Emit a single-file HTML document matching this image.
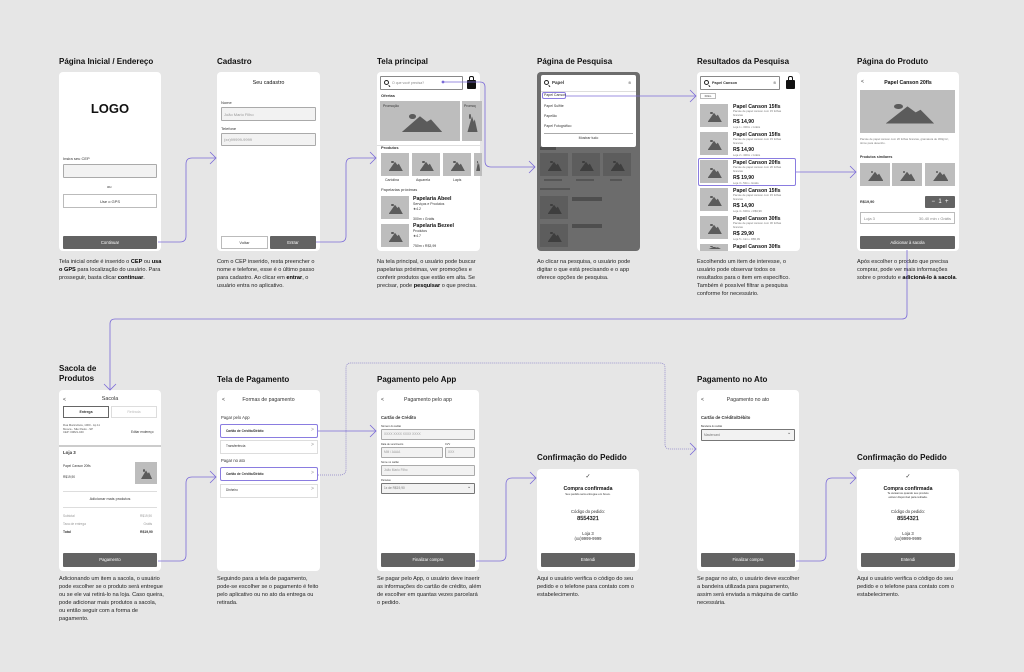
<!DOCTYPE html>
<html><head><meta charset="utf-8">
<style>
*{margin:0;padding:0;box-sizing:border-box}
body{width:1024px;height:672px;background:#e6e6e6;position:relative;overflow:hidden;font-family:"Liberation Sans",sans-serif;color:#222}
.a{position:absolute}
.card{position:absolute;background:#fff;border-radius:4px;overflow:hidden}
.h{position:absolute;font-weight:bold;font-size:8px;color:#111;white-space:nowrap;line-height:10px}
.d{position:absolute;font-size:5.6px;line-height:8px;color:#222;width:105px}
.d b{color:#000}
.t{position:absolute;font-size:4px;line-height:5px;color:#333;white-space:nowrap}
.tb{position:absolute;font-size:5.2px;line-height:6px;color:#111;white-space:nowrap;font-weight:bold}
.in{position:absolute;border:0.8px solid #aaa;background:#f2f2f2;border-radius:1px}
.btn{position:absolute;background:#636363;color:#fff;font-size:4.2px;text-align:center;border-radius:1px}
.ob{position:absolute;border:0.8px solid #bbb;background:#fff;font-size:4px;text-align:center;color:#333}
.img{position:absolute;background:#bdbdbd}
.img::after{content:"";position:absolute;left:27%;right:22%;top:38%;bottom:22%;background:#5b5b5b;clip-path:polygon(0 100%,45% 0,62% 35%,72% 20%,100% 100%)}
.img::before{content:"";position:absolute;left:36%;top:33%;width:9%;height:12%;border-radius:50%;background:#5b5b5b}
.dk{background:#5d5d5d}.dk::after,.dk::before{background:#3e3e3e}
.ln{position:absolute;height:0.8px;background:#ddd}
.row{position:absolute;border:0.8px solid #ddd;background:#fff}
.sel{border:0.9px solid #8a7ce0!important;border-radius:2px}
.chev{position:absolute;font-size:5px;color:#999}
.mag{position:absolute;width:5px;height:5px;border:0.9px solid #222;border-radius:50%}
.mag::after{content:"";position:absolute;left:3.6px;top:3.6px;width:2.4px;height:0.9px;background:#222;transform:rotate(45deg);transform-origin:0 0}
</style></head><body>

<div class="h" style="left:59px;top:57px">Página Inicial / Endereço</div>
<div class="h" style="left:217px;top:57px">Cadastro</div>
<div class="h" style="left:377px;top:57px">Tela principal</div>
<div class="h" style="left:537px;top:57px">Página de Pesquisa</div>
<div class="h" style="left:697px;top:57px">Resultados da Pesquisa</div>
<div class="h" style="left:857px;top:57px">Página do Produto</div>

<!-- card1 -->
<div class="card" style="left:59px;top:72px;width:102px;height:179px"></div>
<div class="a" style="left:59px;top:101px;width:102px;text-align:center;font-weight:bold;font-size:13px;color:#111">LOGO</div>
<div class="t" style="left:63px;top:156px">Insira seu CEP</div>
<div class="in" style="left:63px;top:164px;width:94px;height:14px"></div>
<div class="t" style="left:107px;top:184px">ou</div>
<div class="ob" style="left:63px;top:194px;width:94px;height:14px;line-height:13px">Use o GPS</div>
<div class="btn" style="left:63px;top:236px;width:94px;height:13px;line-height:13px">Continuar</div>
<div class="d" style="left:59px;top:258px">Tela inicial onde é inserido o <b>CEP</b> ou <b>usa o GPS</b> para localização do usuário. Para prosseguir, basta clicar <b>continuar</b>.</div>

<!-- card2 -->
<div class="card" style="left:217px;top:72px;width:103px;height:179px"></div>
<div class="tb" style="left:217px;top:80px;width:103px;text-align:center;font-weight:normal;font-size:5.4px">Seu cadastro</div>
<div class="t" style="left:221px;top:100px">Nome</div>
<div class="in" style="left:221px;top:107px;width:95px;height:14px"></div>
<div class="t" style="left:224px;top:112px;color:#999">João Mario Filho</div>
<div class="t" style="left:221px;top:126px">Telefone</div>
<div class="in" style="left:221px;top:133px;width:95px;height:13px"></div>
<div class="t" style="left:224px;top:137px;color:#999">(xx)99999-9999</div>
<div class="ob" style="left:221px;top:236px;width:47px;height:13px;line-height:12px">Voltar</div>
<div class="btn" style="left:270px;top:236px;width:46px;height:13px;line-height:13px">Entrar</div>
<div class="d" style="left:217px;top:258px">Com o CEP inserido, resta preencher o nome e telefone, esse é o último passo para cadastro. Ao clicar em <b>entrar</b>, o usuário entra no aplicativo.</div>

<!-- card3 -->
<div class="card" style="left:377px;top:72px;width:103px;height:179px"></div>
<div class="in" style="left:380px;top:76px;width:83px;height:14px;background:#fff;border-color:#888"></div>
<div class="mag" style="left:384px;top:80px"></div>
<div class="t" style="left:392px;top:80.5px;color:#888;font-size:3.5px">O que você precisa?</div>
<div class="a" style="left:467px;top:80px;width:9px;height:9px;background:#111;border-radius:1px"></div>
<div class="a" style="left:469px;top:76px;width:5px;height:5px;border:1px solid #111;border-bottom:none;border-radius:2px 2px 0 0"></div>
<div class="t" style="left:381px;top:93px;font-weight:bold">Ofertas</div>
<div class="img" style="left:380px;top:101px;width:80px;height:40px"></div>
<div class="t" style="left:383px;top:104px;font-size:3.5px">Promoção</div>
<div class="img" style="left:462px;top:101px;width:20px;height:40px"></div>
<div class="t" style="left:464px;top:104px;font-size:3.5px">Promoç</div>
<div class="ln" style="left:377px;top:145px;width:103px"></div>
<div class="t" style="left:381px;top:145px;font-weight:bold">Produtos</div>
<div class="img" style="left:381px;top:153px;width:28px;height:23px"></div>
<div class="img" style="left:412px;top:153px;width:28px;height:23px"></div>
<div class="img" style="left:443px;top:153px;width:28px;height:23px"></div>
<div class="img" style="left:474px;top:153px;width:8px;height:23px"></div>
<div class="t" style="left:385px;top:178px;font-size:3.5px">Cartolina</div>
<div class="t" style="left:416px;top:178px;font-size:3.5px">Aquarela</div>
<div class="t" style="left:453px;top:178px;font-size:3.5px">Lapis</div>
<div class="t" style="left:381px;top:187px">Papelarias próximas</div>
<div class="img" style="left:381px;top:196px;width:28px;height:23px"></div>
<div class="tb" style="left:413px;top:196px">Papelaria Abeel</div>
<div class="t" style="left:413px;top:202px;font-size:3.5px">Serviços e Produtos<br>★4.2<br><br>300m • Grátis</div>
<div class="img" style="left:381px;top:224px;width:28px;height:23px"></div>
<div class="tb" style="left:413px;top:223px">Papelaria Bezeel</div>
<div class="t" style="left:413px;top:229px;font-size:3.5px">Produtos<br>★4.7<br><br>750m • R$3,99</div>
<div class="d" style="left:377px;top:258px">Na tela principal, o usuário pode buscar papelarias próximas, ver promoções e conferir produtos que estão em alta. Se precisar, pode <b>pesquisar</b> o que precisa.</div>

<!-- card4 dark -->
<div class="card" style="left:537px;top:72px;width:103px;height:179px;background:#6c6c6c"></div>
<div class="a" style="left:541px;top:75px;width:95px;height:72px;background:#fff;border-radius:2px"></div>
<div class="ln" style="left:541px;top:91px;width:95px"></div>
<div class="mag" style="left:544px;top:80px"></div>
<div class="t" style="left:552px;top:80px;font-size:4.5px;font-weight:bold">Papel</div>
<div class="t" style="left:628px;top:80px;color:#777">⊗</div>
<div class="a sel" style="left:542px;top:92px;width:24px;height:7px"></div>
<div class="t" style="left:544px;top:93px;font-size:3.5px">Papel Canson</div>
<div class="t" style="left:544px;top:104px;font-size:3.5px">Papel Sulfite</div>
<div class="t" style="left:544px;top:114px;font-size:3.5px">Papelão</div>
<div class="t" style="left:544px;top:124px;font-size:3.5px">Papel Fotográfico</div>
<div class="ln" style="left:544px;top:133px;width:89px;background:#aaa"></div>
<div class="t" style="left:537px;top:136px;width:103px;text-align:center;font-size:3.5px">Mostrar tudo</div>
<div class="a" style="left:540px;top:147px;width:16px;height:3px;background:#4e4e4e"></div>
<div class="img dk" style="left:540px;top:153px;width:28px;height:23px"></div>
<div class="img dk" style="left:572px;top:153px;width:28px;height:23px"></div>
<div class="img dk" style="left:603px;top:153px;width:28px;height:23px"></div>
<div class="a" style="left:544px;top:179px;width:18px;height:2px;background:#555"></div>
<div class="a" style="left:576px;top:179px;width:18px;height:2px;background:#555"></div>
<div class="a" style="left:610px;top:179px;width:12px;height:2px;background:#555"></div>
<div class="a" style="left:540px;top:188px;width:30px;height:2px;background:#555"></div>
<div class="img dk" style="left:540px;top:196px;width:28px;height:23px"></div>
<div class="img dk" style="left:540px;top:224px;width:28px;height:23px"></div>
<div class="a" style="left:572px;top:197px;width:30px;height:4px;background:#4e4e4e"></div>
<div class="a" style="left:572px;top:224px;width:30px;height:4px;background:#4e4e4e"></div>
<div class="d" style="left:537px;top:258px">Ao clicar na pesquisa, o usuário pode digitar o que está precisando e o app oferece opções de pesquisa.</div>

<!-- card5 -->
<div class="card" style="left:697px;top:72px;width:103px;height:179px"></div>
<div class="in" style="left:700px;top:76px;width:80px;height:14px;background:#fff;border-color:#888"></div>
<div class="mag" style="left:704px;top:80px"></div>
<div class="t" style="left:712px;top:80.5px;font-size:3.8px;font-weight:bold">Papel Canson</div>
<div class="t" style="left:773px;top:80px;color:#777">⊗</div>
<div class="a" style="left:786px;top:80px;width:9px;height:9px;background:#111;border-radius:1px"></div>
<div class="a" style="left:788px;top:76px;width:5px;height:5px;border:1px solid #111;border-bottom:none;border-radius:2px 2px 0 0"></div>
<div class="ob" style="left:700px;top:93px;width:16px;height:6px;font-size:3px;line-height:5px">Filtro</div>

<div class="img" style="left:700px;top:104px;width:28px;height:23px"></div>
<div class="tb" style="left:733px;top:104px">Papel Canson 15fls</div>
<div class="t" style="left:733px;top:110px;font-size:2.8px;line-height:3.5px;color:#777">Pacote de papel canson com 15 folhas<br>brancas</div>
<div class="tb" style="left:733px;top:119px">R$ 14,90</div>
<div class="t" style="left:733px;top:125px;font-size:2.8px;color:#777">Loja 1 • 300m • Grátis</div>

<div class="img" style="left:700px;top:132px;width:28px;height:23px"></div>
<div class="tb" style="left:733px;top:132px">Papel Canson 15fls</div>
<div class="t" style="left:733px;top:138px;font-size:2.8px;line-height:3.5px;color:#777">Pacote de papel canson com 15 folhas<br>brancas</div>
<div class="tb" style="left:733px;top:147px">R$ 14,90</div>
<div class="t" style="left:733px;top:153px;font-size:2.8px;color:#777">Loja 2 • 400m • Grátis</div>

<div class="a sel" style="left:698px;top:158px;width:98px;height:28px"></div>
<div class="img" style="left:700px;top:160px;width:28px;height:23px"></div>
<div class="tb" style="left:733px;top:160px">Papel Canson 20fls</div>
<div class="t" style="left:733px;top:166px;font-size:2.8px;line-height:3.5px;color:#777">Pacote de papel canson com 20 folhas<br>brancas</div>
<div class="tb" style="left:733px;top:175px">R$ 19,90</div>
<div class="t" style="left:733px;top:181px;font-size:2.8px;color:#777">Loja 3 • 50m • Grátis</div>

<div class="img" style="left:700px;top:188px;width:28px;height:23px"></div>
<div class="tb" style="left:733px;top:188px">Papel Canson 15fls</div>
<div class="t" style="left:733px;top:194px;font-size:2.8px;line-height:3.5px;color:#777">Pacote de papel canson com 15 folhas<br>brancas</div>
<div class="tb" style="left:733px;top:203px">R$ 14,90</div>
<div class="t" style="left:733px;top:209px;font-size:2.8px;color:#777">Loja 4 • 600m • R$3,99</div>

<div class="img" style="left:700px;top:216px;width:28px;height:23px"></div>
<div class="tb" style="left:733px;top:216px">Papel Canson 30fls</div>
<div class="t" style="left:733px;top:222px;font-size:2.8px;line-height:3.5px;color:#777">Pacote de papel canson com 30 folhas<br>brancas</div>
<div class="tb" style="left:733px;top:231px">R$ 29,90</div>
<div class="t" style="left:733px;top:237px;font-size:2.8px;color:#777">Loja 5 • 1km • R$5,99</div>
<div class="img" style="left:700px;top:244px;width:28px;height:7px"></div>
<div class="tb" style="left:733px;top:244px">Papel Canson 30fls</div>
<div class="d" style="left:697px;top:258px">Escolhendo um item de interesse, o usuário pode observar todos os resultados para o item em específico. Também é possível filtrar a pesquisa conforme for necessário.</div>

<!-- card6 -->
<div class="card" style="left:857px;top:72px;width:102px;height:179px"></div>
<div class="t" style="left:861px;top:80px;font-size:5px">&lt;</div>
<div class="tb" style="left:857px;top:80px;width:102px;text-align:center">Papel Canson 20fls</div>
<div class="img" style="left:860px;top:90px;width:95px;height:43px"></div>
<div class="t" style="left:860px;top:137px;font-size:2.8px;line-height:4px;color:#777">Pacote de papel canson com 20 folhas brancas, gramatura de 300g/m²,<br>ótimo para desenho.</div>
<div class="t" style="left:860px;top:155px;font-weight:bold;font-size:3.6px">Produtos similares</div>
<div class="img" style="left:860px;top:163px;width:30px;height:23px"></div>
<div class="img" style="left:892px;top:163px;width:30px;height:23px"></div>
<div class="img" style="left:925px;top:163px;width:30px;height:23px"></div>
<div class="t" style="left:860px;top:200px;font-size:3.8px;font-weight:bold">R$19,90</div>
<div class="btn" style="left:925px;top:196px;width:30px;height:12px;line-height:12px;font-size:6px">−&nbsp;&nbsp;1&nbsp;&nbsp;+</div>
<div class="ob" style="left:860px;top:212px;width:95px;height:12px;line-height:11px;text-align:left;padding:0 3px;color:#888">Loja 3<span style="float:right">30-40 min • Grátis</span></div>
<div class="btn" style="left:860px;top:236px;width:95px;height:13px;line-height:13px">Adicionar à sacola</div>
<div class="d" style="left:857px;top:258px">Após escolher o produto que precisa comprar, pode ver mais informações sobre o produto e <b>adicioná-lo à sacola</b>.</div>

<!-- row2 titles -->
<div class="h" style="left:59px;top:364px;line-height:10px">Sacola de<br>Produtos</div>
<div class="h" style="left:217px;top:375px">Tela de Pagamento</div>
<div class="h" style="left:377px;top:375px">Pagamento pelo App</div>
<div class="h" style="left:537px;top:453px">Confirmação do Pedido</div>
<div class="h" style="left:697px;top:375px">Pagamento no Ato</div>
<div class="h" style="left:857px;top:453px">Confirmação do Pedido</div>

<!-- sacola -->
<div class="card" style="left:59px;top:390px;width:102px;height:181px"></div>
<div class="t" style="left:63px;top:398px;font-size:5px">&lt;</div>
<div class="t" style="left:59px;top:397px;width:102px;text-align:center;font-size:5.4px">Sacola</div>
<div class="ob" style="left:63px;top:406px;width:46px;height:12px;line-height:11px;border-color:#666;font-weight:bold;font-size:3.5px">Entrega</div>
<div class="ob" style="left:111px;top:406px;width:46px;height:12px;line-height:11px;color:#bbb;border-color:#ddd;font-size:3.5px">Retirada</div>
<div class="t" style="left:63px;top:424px;font-size:2.8px;line-height:3.5px;color:#555">Rua Maricultura, 1000 - Ap 11<br>Mooca - São Paulo - SP<br>CEP: 00821-040</div>
<div class="t" style="left:131px;top:430px;font-size:3.2px">Editar endereço</div>
<div class="a" style="left:59px;top:445px;width:102px;height:2px;background:#ccc"></div>
<div class="t" style="left:63px;top:450px;font-weight:bold;font-size:4.4px">Loja 3</div>
<div class="t" style="left:63px;top:464px;font-size:3.2px">Papel Canson 20fls</div>
<div class="t" style="left:63px;top:475px;font-size:3.2px">R$19,90</div>
<div class="img" style="left:135px;top:462px;width:22px;height:22px"></div>
<div class="ln" style="left:63px;top:491px;width:94px"></div>
<div class="t" style="left:59px;top:497px;width:102px;text-align:center;font-size:3.8px">Adicionar mais produtos</div>
<div class="ln" style="left:63px;top:507px;width:94px"></div>
<div class="t" style="left:63px;top:512px;font-size:3.2px;line-height:8px;color:#999">Subtotal<br>Taxa de entrega</div>
<div class="t" style="left:140px;top:512px;font-size:3.2px;line-height:8px;color:#999;text-align:right">R$19,90<br>Grátis</div>
<div class="t" style="left:63px;top:530px;font-size:3.4px;font-weight:bold">Total</div>
<div class="t" style="left:140px;top:530px;font-size:3.4px;font-weight:bold">R$19,90</div>
<div class="btn" style="left:63px;top:553px;width:94px;height:14px;line-height:14px">Pagamento</div>
<div class="d" style="left:59px;top:575px">Adicionando um item a sacola, o usuário pode escolher se o produto será entregue ou se ele vai retirá-lo na loja. Caso queira, pode adicionar mais produtos a sacola, ou então seguir com a forma de pagamento.</div>

<!-- pagamento -->
<div class="card" style="left:217px;top:390px;width:103px;height:181px"></div>
<div class="t" style="left:222px;top:398px;font-size:5px">&lt;</div>
<div class="t" style="left:217px;top:398px;width:103px;text-align:center;font-size:5.2px">Formas de pagamento</div>
<div class="t" style="left:221px;top:415px;font-size:4.2px">Pagar pelo App</div>
<div class="row sel" style="left:220px;top:424px;width:98px;height:14px"></div>
<div class="t" style="left:226px;top:429px;font-size:3.2px;font-weight:bold">Cartão de Crédito/Débito</div>
<div class="chev" style="left:311px;top:427px">&gt;</div>
<div class="row" style="left:220px;top:440px;width:98px;height:14px"></div>
<div class="t" style="left:226px;top:444px;font-size:3.2px">Transferência</div>
<div class="chev" style="left:311px;top:442px">&gt;</div>
<div class="t" style="left:221px;top:458px;font-size:4.2px">Pagar no ato</div>
<div class="row sel" style="left:220px;top:467px;width:98px;height:14px"></div>
<div class="t" style="left:226px;top:472px;font-size:3.2px;font-weight:bold">Cartão de Crédito/Débito</div>
<div class="chev" style="left:311px;top:470px">&gt;</div>
<div class="row" style="left:220px;top:484px;width:98px;height:14px"></div>
<div class="t" style="left:226px;top:488px;font-size:3.2px">Dinheiro</div>
<div class="chev" style="left:311px;top:486px">&gt;</div>
<div class="d" style="left:217px;top:575px">Seguindo para a tela de pagamento, pode-se escolher se o pagamento é feito pelo aplicativo ou no ato da entrega ou retirada.</div>

<!-- pagamento app -->
<div class="card" style="left:377px;top:390px;width:102px;height:181px"></div>
<div class="t" style="left:381px;top:398px;font-size:5px">&lt;</div>
<div class="t" style="left:377px;top:398px;width:102px;text-align:center;font-size:5.2px">Pagamento pelo app</div>
<div class="t" style="left:381px;top:415px;font-size:4.2px;font-weight:bold">Cartão de Crédito</div>
<div class="t" style="left:381px;top:424px;font-size:2.5px">Número do cartão</div>
<div class="in" style="left:381px;top:429px;width:94px;height:11px"></div>
<div class="t" style="left:384px;top:432px;font-size:3.2px;color:#999">XXXX XXXX XXXX XXXX</div>
<div class="t" style="left:381px;top:442px;font-size:2.5px">Data de vencimento</div>
<div class="t" style="left:445px;top:442px;font-size:2.5px">CVV</div>
<div class="in" style="left:381px;top:447px;width:62px;height:11px"></div>
<div class="t" style="left:384px;top:450px;font-size:3.2px;color:#999">MM / AAAA</div>
<div class="in" style="left:445px;top:447px;width:30px;height:11px"></div>
<div class="t" style="left:448px;top:450px;font-size:3.2px;color:#999">XXX</div>
<div class="t" style="left:381px;top:460px;font-size:2.5px">Nome no cartão</div>
<div class="in" style="left:381px;top:465px;width:94px;height:11px"></div>
<div class="t" style="left:384px;top:468px;font-size:3.2px;color:#999">João Mario Filho</div>
<div class="t" style="left:381px;top:478px;font-size:2.5px">Parcelas</div>
<div class="in" style="left:381px;top:483px;width:94px;height:11px;border-color:#777"></div>
<div class="t" style="left:384px;top:486px;font-size:3.2px;color:#777">1x de R$19,90</div>
<div class="t" style="left:467px;top:485px;font-size:5px;color:#555">⌄</div>
<div class="btn" style="left:381px;top:553px;width:94px;height:14px;line-height:14px">Finalizar compra</div>
<div class="d" style="left:377px;top:575px">Se pagar pelo App, o usuário deve inserir as informações do cartão de crédito, além de escolher em quantas vezes parcelará o pedido.</div>

<!-- confirm 1 -->
<div class="card" style="left:537px;top:469px;width:102px;height:102px"></div>
<div class="t" style="left:537px;top:474px;width:102px;text-align:center;font-size:6px;line-height:7px">✓</div>
<div class="tb" style="left:537px;top:486px;width:102px;text-align:center">Compra confirmada</div>
<div class="t" style="left:537px;top:492px;width:102px;text-align:center;font-size:2.8px">Seu pedido será entregue em breve.</div>
<div class="t" style="left:537px;top:509px;width:102px;text-align:center;font-size:4.2px">Código do pedido:</div>
<div class="tb" style="left:537px;top:516px;width:102px;text-align:center;font-size:5.6px;font-weight:normal;-webkit-text-stroke:0.2px #111">8554321</div>
<div class="t" style="left:537px;top:531px;width:102px;text-align:center;font-size:4.2px">Loja 3<br>(xx)9999-9999</div>
<div class="btn" style="left:541px;top:553px;width:94px;height:14px;line-height:14px">Entendi</div>
<div class="d" style="left:537px;top:575px">Aqui o usuário verifica o código do seu pedido e o telefone para contato com o estabelecimento.</div>

<!-- pagamento ato -->
<div class="card" style="left:697px;top:390px;width:102px;height:181px"></div>
<div class="t" style="left:701px;top:398px;font-size:5px">&lt;</div>
<div class="t" style="left:697px;top:398px;width:102px;text-align:center;font-size:5.2px">Pagamento no ato</div>
<div class="t" style="left:701px;top:415px;font-size:4.2px;font-weight:bold">Cartão de Crédito/Débito</div>
<div class="t" style="left:701px;top:424px;font-size:2.5px">Bandeira do cartão</div>
<div class="in" style="left:701px;top:429px;width:94px;height:12px;border-color:#777"></div>
<div class="t" style="left:704px;top:433px;font-size:3.2px;color:#777">Mastercard</div>
<div class="t" style="left:787px;top:431px;font-size:5px;color:#555">⌄</div>
<div class="btn" style="left:701px;top:553px;width:94px;height:14px;line-height:14px">Finalizar compra</div>
<div class="d" style="left:697px;top:575px">Se pagar no ato, o usuário deve escolher a bandeira utilizada para pagamento, assim será enviada a máquina de cartão necessária.</div>

<!-- confirm 2 -->
<div class="card" style="left:857px;top:469px;width:102px;height:102px"></div>
<div class="t" style="left:857px;top:474px;width:102px;text-align:center;font-size:6px;line-height:7px">✓</div>
<div class="tb" style="left:857px;top:486px;width:102px;text-align:center">Compra confirmada</div>
<div class="t" style="left:857px;top:492px;width:102px;text-align:center;font-size:2.8px;line-height:3.5px">Te avisamos quando seu produto<br>estiver disponível para retirada.</div>
<div class="t" style="left:857px;top:509px;width:102px;text-align:center;font-size:4.2px">Código do pedido:</div>
<div class="tb" style="left:857px;top:516px;width:102px;text-align:center;font-size:5.6px;font-weight:normal;-webkit-text-stroke:0.2px #111">8554321</div>
<div class="t" style="left:857px;top:531px;width:102px;text-align:center;font-size:4.2px">Loja 3<br>(xx)9999-9999</div>
<div class="btn" style="left:861px;top:553px;width:94px;height:14px;line-height:14px">Entendi</div>
<div class="d" style="left:857px;top:575px">Aqui o usuário verifica o código do seu pedido e o telefone para contato com o estabelecimento.</div>

<svg class="a" style="left:0;top:0" width="1024" height="672" viewBox="0 0 1024 672" fill="none" stroke="#7b6bd8" stroke-width="0.8">
<path d="M158 242 H180 Q186 242 186 236 V164 Q186 158 192 158 H216"/>
<path d="M210 152 L216 158 L210 164"/>
<path d="M316 242 H340 Q346 242 346 236 V164 Q346 158 352 158 H376"/>
<path d="M370 152 L376 158 L370 164"/>
<circle cx="443" cy="82" r="1" fill="#7b6bd8"/>
<path d="M443 82 H480 Q485 82 485 87 V161 Q485 167 491 167 H535"/>
<path d="M529 161 L535 167 L529 173"/>
<path d="M566 96 H696"/>
<path d="M690 90 L696 96 L690 102"/>
<path d="M796 172 H856"/>
<path d="M850 166 L856 172 L850 178"/>
<path d="M907 250 V314 Q907 319 902 319 H115 Q110 319 110 324 V390"/>
<path d="M104 384 L110 390 L116 384"/>
<path d="M158 561 H180 Q186 561 186 555 V483 Q186 477 192 477 H216"/>
<path d="M210 471 L216 477 L210 483"/>
<path d="M318 431 H376"/>
<path d="M370 425 L376 431 L370 437"/>
<path d="M476 561 H500 Q506 561 506 555 V484 Q506 478 512 478 H536"/>
<path d="M530 472 L536 478 L530 484"/>
<path d="M796 561 H820 Q826 561 826 555 V484 Q826 478 832 478 H856"/>
<path d="M850 472 L856 478 L850 484"/>
<path d="M318 475 H340 Q346 475 346 469 V368 Q346 363 351 363 H660 Q665 363 665 368 V444 Q665 449 670 449 H696" stroke-dasharray="1 1" stroke="#8a80c8"/>
<path d="M690 443 L696 449 L690 455"/>
</svg>
</body></html>
